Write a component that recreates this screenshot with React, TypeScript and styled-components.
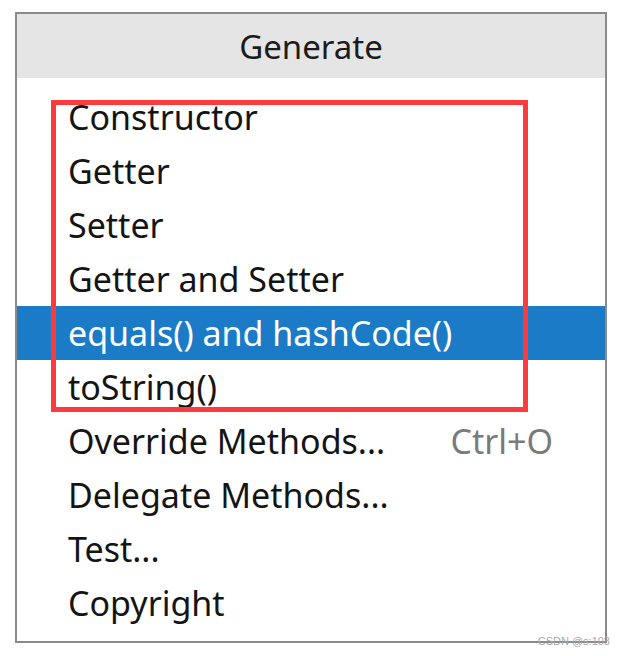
import styled, { createGlobalStyle } from "styled-components";

const GlobalStyle = createGlobalStyle`
    html, body {
        margin: 0;
        padding: 0;
        background: #ffffff;
    }
`;

const Page = styled.div`
    position: relative;
    width: 629px;
    height: 656px;
    padding: 12px 0 0 15px;
    box-sizing: border-box;
    font-family: "Noto Sans", "Open Sans", sans-serif;
`;

const Panel = styled.div`
    width: 592px;
    border: 2px solid #8a8a8a;
    background: #ffffff;
    box-sizing: border-box;
`;

const Header = styled.div`
    height: 64px;
    background: #e5e5e5;
    display: flex;
    align-items: center;
    justify-content: center;
    font-size: 33px;
    color: #1b1b1b;
`;

const List = styled.div`
    position: relative;
    padding: 12px 0 11px;
    display: flex;
    flex-direction: column;
`;

const Row = styled.div<{ active?: boolean }>`
    height: 54px;
    display: flex;
    align-items: center;
    justify-content: space-between;
    padding: 0 52px 0 51px;
    font-size: 34px;
    color: ${(props) => (props.active ? "#ffffff" : "#141414")};
    background: ${(props) => (props.active ? "#1b7bc6" : "transparent")};
`;

const Shortcut = styled.span`
    color: #7a7a7a;
`;

// 빨간 강조 박스
const Highlight = styled.div`
    position: absolute;
    left: 34px;
    top: 22px;
    width: 477px;
    height: 312px;
    border: 5px solid #fd3b3f;
    box-sizing: border-box;
    pointer-events: none;
`;

const Watermark = styled.div`
    position: absolute;
    right: 19px;
    top: 635px;
    font-size: 11px;
    color: #a8a8a8;
    font-family: "Liberation Sans", sans-serif;
`;

const items = [
    { label: "Constructor" },
    { label: "Getter" },
    { label: "Setter" },
    { label: "Getter and Setter" },
    { label: "equals() and hashCode()", active: true },
    { label: "toString()" },
    { label: "Override Methods...", shortcut: "Ctrl+O" },
    { label: "Delegate Methods..." },
    { label: "Test..." },
    { label: "Copyright" },
];

function App() {
    return (
        <Page>
            <GlobalStyle />
            <Panel>
                <Header>Generate</Header>
                <List>
                    {items.map((item) => (
                        <Row key={item.label} active={item.active}>
                            <span>{item.label}</span>
                            {item.shortcut && <Shortcut>{item.shortcut}</Shortcut>}
                        </Row>
                    ))}
                    <Highlight />
                </List>
            </Panel>
            <Watermark>CSDN @s:103</Watermark>
        </Page>
    );
}

export default App;
